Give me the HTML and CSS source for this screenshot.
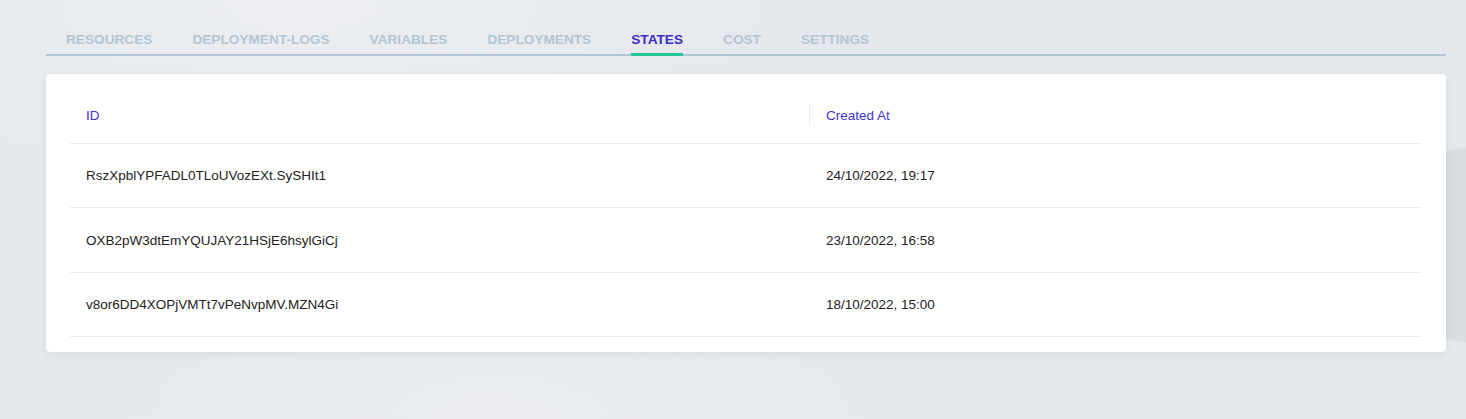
FILE: index.html
```html
<!DOCTYPE html>
<html lang="en">
<head>
    <meta charset="UTF-8">
    <title>States</title>
    <link rel="stylesheet" href="styles.css">
</head>
<body>
    <div class="page">
        <nav class="tabs">
            <a class="tab">Resources</a>
            <a class="tab">Deployment-logs</a>
            <a class="tab">Variables</a>
            <a class="tab">Deployments</a>
            <a class="tab active">States</a>
            <a class="tab">Cost</a>
            <a class="tab">Settings</a>
        </nav>
        <div class="card">
            <table class="states">
                <thead>
                    <tr>
                        <th class="col-id">ID</th>
                        <th class="col-date"><span>Created At</span></th>
                    </tr>
                </thead>
                <tbody>
                    <tr>
                        <td>RszXpblYPFADL0TLoUVozEXt.SySHIt1</td>
                        <td class="date">24/10/2022, 19:17</td>
                    </tr>
                    <tr>
                        <td>OXB2pW3dtEmYQUJAY21HSjE6hsylGiCj</td>
                        <td class="date">23/10/2022, 16:58</td>
                    </tr>
                    <tr>
                        <td>v8or6DD4XOPjVMTt7vPeNvpMV.MZN4Gi</td>
                        <td class="date">18/10/2022, 15:00</td>
                    </tr>
                </tbody>
            </table>
        </div>
    </div>
</body>
</html>
```

FILE: styles.css
```css
html, body {
    height: 100%;
}
body {
    margin: 0;
    font-family: "Liberation Sans", Arial, sans-serif;
    color: #222;
    background-color: #e5e8ec;
    background-image:
        radial-gradient(ellipse 240px 140px at 1500px 245px, #d9dde2 70%, transparent 72%),
        radial-gradient(ellipse 500px 200px at 300px 0px, #eceef1 0%, transparent 100%),
        radial-gradient(ellipse 400px 160px at 500px 419px, #eaecef 0%, transparent 100%);
}
.page {
    padding: 28px 20px 0 46px;
}
.tabs {
    display: flex;
    border-bottom: 2px solid #b3c5d2;
}
.tab {
    position: relative;
    padding: 0 20px 2px;
    line-height: 24px;
    font-size: 13.65px;
    font-weight: bold;
    text-transform: uppercase;
    color: #b4c5d2;
    cursor: pointer;
}
.tab.active {
    color: #3a2ec4;
}
.tab.active::after {
    content: "";
    position: absolute;
    left: 20px;
    right: 20px;
    bottom: -2px;
    height: 3px;
    background: #1fc99a;
}
.card {
    margin-top: 18px;
    background: white;
    border-radius: 4px;
    box-shadow: 0 2px 10px rgba(0, 0, 0, 0.06);
    padding: 13px 24px 15px;
}
.states {
    width: 100%;
    border-collapse: collapse;
    font-size: 13.5px;
}
.states th {
    height: 56px;
    text-align: left;
    font-weight: normal;
    color: #3f33d2;
    padding: 0 16px;
    border-bottom: 1px solid #ececec;
}
.states .col-id {
    width: 707px;
}
.states .col-date {
    position: relative;
    padding-left: 17px;
}
.states .col-date::before {
    content: "";
    position: absolute;
    left: 0;
    top: 17px;
    height: 22px;
    border-left: 1px solid #ebebeb;
}
.states td {
    height: 63.4px;
    padding: 0 16px;
    border-bottom: 1px solid #ececec;
    color: #222;
}
.states td.date {
    padding-left: 17px;
}
```
